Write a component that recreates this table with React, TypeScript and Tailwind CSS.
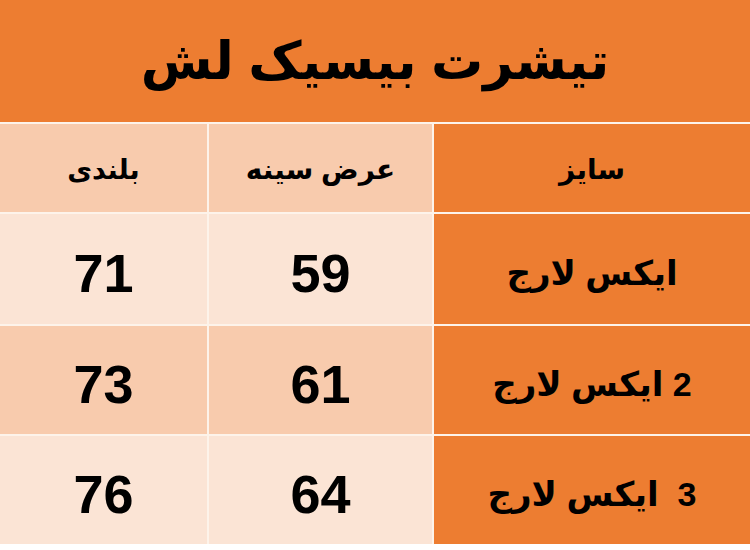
import React from 'react';

const rows = [
    { size: 'ایکس لارج', chest: '59', height: '71', bg: 'bg-[#fbe4d5]' },
    { size: '2 ایکس لارج', chest: '61', height: '73', bg: 'bg-[#f8cbad]' },
    { size: '3\u00a0\u00a0ایکس لارج', chest: '64', height: '76', bg: 'bg-[#fbe4d5]' },
];

const App: React.FC = () => {
    return (
        <div
            dir="rtl"
            className="w-[750px] h-[550px] bg-white text-black overflow-hidden"
            style={{ fontFamily: '"Liberation Sans", "DejaVu Sans", sans-serif' }}
        >
            <div className="h-[122px] bg-[#ed7d31] flex items-center justify-center">
                <h1 className="text-[52px] font-bold leading-none">تیشرت بیسیک لش</h1>
            </div>

            <div className="grid grid-cols-[316px_223px_207px] grid-rows-[88px_110px_108px_108px] gap-[2px] pt-[2px] bg-[#fdf3ea]">
                <div className="bg-[#ed7d31] flex items-center justify-center pt-1 text-[28px] font-bold">سایز</div>
                <div className="bg-[#f8cbad] flex items-center justify-center pt-1 text-[28px] font-bold">عرض سینه</div>
                <div className="bg-[#f8cbad] flex items-center justify-center pt-1 text-[27px] font-bold">بلندی</div>

                {rows.map((r, i) => (
                    <React.Fragment key={i}>
                        <div className="bg-[#ed7d31] flex items-center justify-center pt-2 text-[34px] font-bold">{r.size}</div>
                        <div className={`${r.bg} flex items-center justify-center pt-2 text-[54px] font-bold`}>{r.chest}</div>
                        <div className={`${r.bg} flex items-center justify-center pt-2 text-[54px] font-bold`}>{r.height}</div>
                    </React.Fragment>
                ))}
            </div>
        </div>
    );
};

export default App;
